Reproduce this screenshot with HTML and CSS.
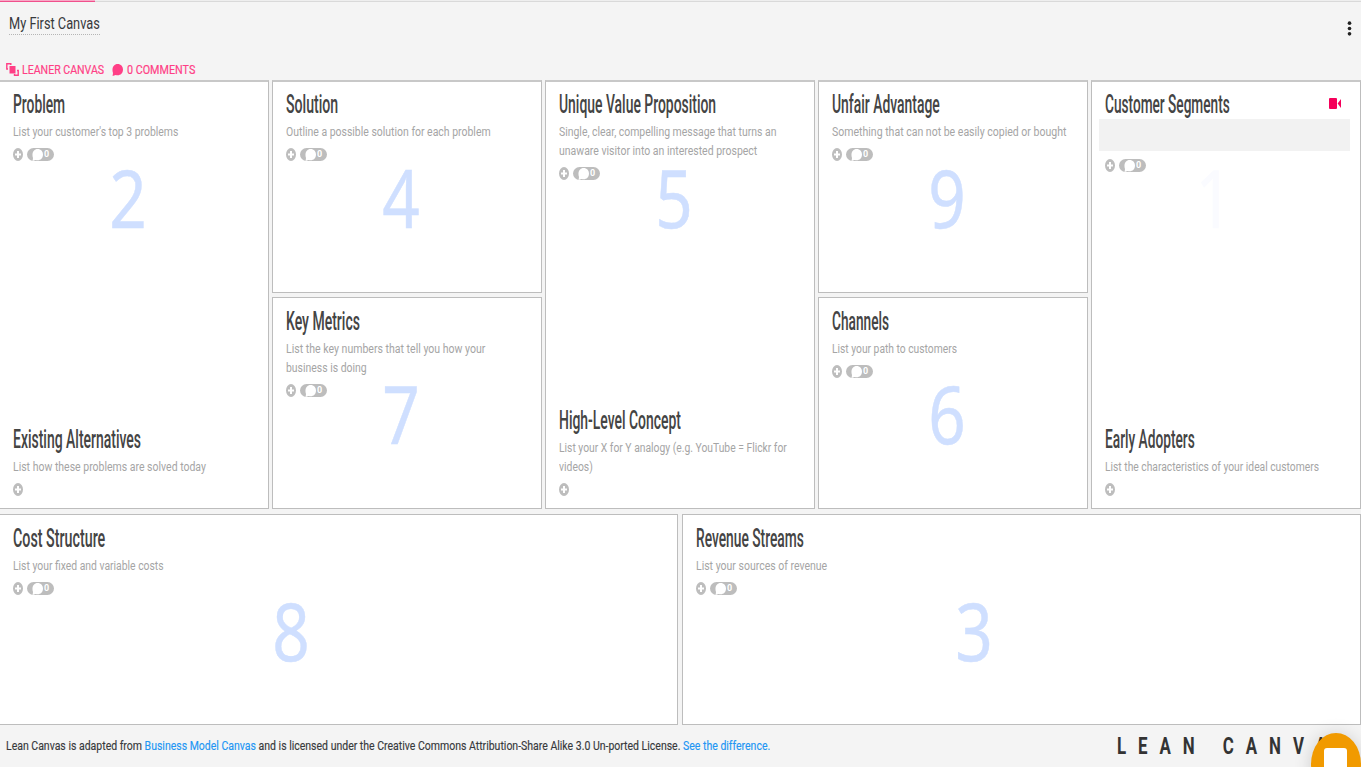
FILE: index.html
```html
<!DOCTYPE html>
<html lang="en">
<head>
<meta charset="utf-8">
<title>My First Canvas</title>
<link rel="stylesheet" href="styles.css">
</head>
<body>
<svg class="defs" aria-hidden="true">
  <symbol id="add" viewBox="0 0 10 13"><ellipse cx="5" cy="6.5" rx="5" ry="6.4" fill="#bdbdbd"/><path d="M5 3v7M2 6.5h6" stroke="#fff" stroke-width="2"/></symbol>
  <symbol id="bubble" viewBox="0 0 11 11" preserveAspectRatio="none"><path d="M.6 11 1 8.2C-.6 4 1.600 0 5.700 0 8.800 0 11 2.200 11 5.100 11 9.200 7.200 11.300 3.600 10Z" fill="currentColor"/></symbol>
</svg>
<div class="page">
  <div class="progress"><div class="progress-bar"></div></div>
  <header class="top">
    <h1 class="name"><span data-fit="91">My First Canvas</span></h1>
    <svg class="more" viewBox="0 0 4 14"><circle cx="2" cy="2" r="1.700"/><circle cx="2" cy="7" r="1.700"/><circle cx="2" cy="12" r="1.700"/></svg>
  </header>
  <nav class="links">
    <svg class="swap" viewBox="0 0 13 13"><path d="M3.500 3h6v7.500h-6z" fill="currentColor"/><path d="M2 6H.8V.8h4V2M11 7.500h1.200v4.700H8.500V11" fill="none" stroke="currentColor" stroke-width="1.400"/></svg>
    <a class="link-a"><span data-fit="82">LEANER CANVAS</span></a>
    <svg class="talk"><use href="#bubble"/></svg>
    <a><span data-fit="68">0 COMMENTS</span></a>
  </nav>
  <main class="canvas">
    <div class="row">
      <section class="box split">
        <div class="num">2</div>
        <div class="block"><h2><span data-fit="52">Problem</span></h2><p><span data-fit="165">List your customer's top 3 problems</span></p><div class="tools"><svg class="add"><use href="#add"/></svg><div class="pill"><svg><use href="#bubble"/></svg><b>0</b></div></div></div>
        <div class="block"><h2><span data-fit="128">Existing Alternatives</span></h2><p><span data-fit="193">List how these problems are solved today</span></p><div class="tools"><svg class="add"><use href="#add"/></svg></div></div>
      </section>
      <div class="stack">
        <section class="box">
          <div class="num">4</div>
          <div class="block"><h2><span data-fit="52">Solution</span></h2><p><span data-fit="205">Outline a possible solution for each problem</span></p><div class="tools"><svg class="add"><use href="#add"/></svg><div class="pill"><svg><use href="#bubble"/></svg><b>0</b></div></div></div>
        </section>
        <section class="box">
          <div class="num">7</div>
          <div class="block"><h2><span data-fit="74">Key Metrics</span></h2><p><span data-fit="199">List the key numbers that tell you how your</span><span data-fit="81">business is doing</span></p><div class="tools"><svg class="add"><use href="#add"/></svg><div class="pill"><svg><use href="#bubble"/></svg><b>0</b></div></div></div>
        </section>
      </div>
      <section class="box split">
        <div class="num">5</div>
        <div class="block"><h2><span data-fit="157">Unique Value Proposition</span></h2><p><span data-fit="217">Single, clear, compelling message that turns an</span><span data-fit="198">unaware visitor into an interested prospect</span></p><div class="tools"><svg class="add"><use href="#add"/></svg><div class="pill"><svg><use href="#bubble"/></svg><b>0</b></div></div></div>
        <div class="block"><h2><span data-fit="122">High-Level Concept</span></h2><p><span data-fit="228">List your X for Y analogy (e.g. YouTube = Flickr for</span><span data-fit="34">videos)</span></p><div class="tools"><svg class="add"><use href="#add"/></svg></div></div>
      </section>
      <div class="stack">
        <section class="box">
          <div class="num">9</div>
          <div class="block"><h2><span data-fit="108">Unfair Advantage</span></h2><p><span data-fit="234">Something that can not be easily copied or bought</span></p><div class="tools"><svg class="add"><use href="#add"/></svg><div class="pill"><svg><use href="#bubble"/></svg><b>0</b></div></div></div>
        </section>
        <section class="box">
          <div class="num">6</div>
          <div class="block"><h2><span data-fit="57">Channels</span></h2><p><span data-fit="125">List your path to customers</span></p><div class="tools"><svg class="add"><use href="#add"/></svg><div class="pill"><svg><use href="#bubble"/></svg><b>0</b></div></div></div>
        </section>
      </div>
      <section class="box split">
        <div class="num faint">1</div>
        <div class="block"><div class="head"><h2><span data-fit="125">Customer Segments</span></h2><svg class="video" viewBox="0 0 12 11"><rect width="8" height="11" rx="1"/><path d="M8.600 5.500 12 1v9z"/></svg></div><div class="field"></div><div class="tools"><svg class="add"><use href="#add"/></svg><div class="pill"><svg><use href="#bubble"/></svg><b>0</b></div></div></div>
        <div class="block"><h2><span data-fit="90">Early Adopters</span></h2><p><span data-fit="214">List the characteristics of your ideal customers</span></p><div class="tools"><svg class="add"><use href="#add"/></svg></div></div>
      </section>
    </div>
    <div class="row lower">
      <section class="box">
        <div class="num wide">8</div>
        <div class="block"><h2><span data-fit="92">Cost Structure</span></h2><p><span data-fit="151">List your fixed and variable costs</span></p><div class="tools"><svg class="add"><use href="#add"/></svg><div class="pill"><svg><use href="#bubble"/></svg><b>0</b></div></div></div>
      </section>
      <section class="box">
        <div class="num wide">3</div>
        <div class="block"><h2><span data-fit="108">Revenue Streams</span></h2><p><span data-fit="131">List your sources of revenue</span></p><div class="tools"><svg class="add"><use href="#add"/></svg><div class="pill"><svg><use href="#bubble"/></svg><b>0</b></div></div></div>
      </section>
    </div>
  </main>
  <footer class="foot">
    <div class="license"><span data-fit="764">Lean Canvas is adapted from <a>Business Model Canvas</a> and is licensed under the Creative Commons Attribution-Share Alike 3.0 Un-ported License. <a>See the difference.</a></span></div>
    <div class="brand"><span data-fit="244">LEAN CANVAS</span></div>
  </footer>
  <div class="chat"><div class="chat-icon"></div></div>
</div>
<script src="fit.js"></script>
</body>
</html>
```

FILE: styles.css
```css
* { box-sizing: border-box; }
body {
  margin: 0;
  background: #f4f4f4;
  color: #37393c;
  font-family: Roboto, "Liberation Sans", sans-serif;
}
h1, h2, p { margin: 0; font-weight: 400; }
svg { display: block; flex: none; }
.defs { position: absolute; width: 0; height: 0; }
.page {
  position: relative;
  display: flex;
  flex-direction: column;
  width: 1361px;
  height: 767px;
  overflow: hidden;
}
[data-fit] {
  display: block;
  width: max-content;
  white-space: nowrap;
  transform-origin: left center;
}
.progress { height: 2px; background: linear-gradient(#eee 50%, #d9d9d9 50%); }
.progress-bar { width: 95px; height: 2px; background: linear-gradient(#f7a8c6 50%, #f0508c 50%); }
.top { display: flex; justify-content: space-between; height: 57px; padding: 9px 9px 0 9px; }
.name {
  width: 91px;
  height: 24px;
  border-bottom: 1px dotted #b5b5b5;
  font-size: 17px;
  line-height: 24px;
}
.more { width: 5px; height: 15px; margin: 10px 0 0; fill: #222; }
.links {
  display: flex;
  align-items: center;
  height: 21px;
  padding-left: 6px;
  color: #ff3f86;
  font-size: 12.500px;
  line-height: 18px;
  -webkit-text-stroke: .2px #ff3f86;
}
.links a { width: 90px; }
.swap { width: 13px; height: 13px; margin-right: 3px; }
.talk { width: 11px; height: 12px; margin: 0 4px 0 0; }
.canvas { display: flex; flex-direction: column; gap: 5px; width: 1362px; margin-left: -1px; }
.row { display: grid; grid-template-columns: repeat(5, 270px); gap: 3px; height: 429px; }
.lower { grid-template-columns: 679px 679px; column-gap: 4px; height: 211px; }
.stack { display: grid; grid-template-columns: minmax(0, 1fr); grid-template-rows: 213px 212px; gap: 4px; }
.box {
  position: relative;
  display: flex;
  flex-direction: column;
  justify-content: space-between;
  min-width: 0;
  padding: 8px 10px 12px 13px;
  background: #fff;
  border: 1px solid #bdbdbd;
}
.row:not(.lower) > .box, .stack > .box:first-child { border-top: 2px solid #c8c8c8; padding-top: 7px; }
.block { position: relative; }
h2 { height: 30px; color: #444; font-size: 25px; font-weight: 500; line-height: 31px; }
p { padding-top: 4px; color: #a5a5a5; font-size: 12.500px; line-height: 18.500px; }
.tools { display: flex; gap: 4px; height: 20px; padding-top: 6.500px; }
.add { width: 10px; height: 13px; }
.pill {
  display: flex;
  width: 27px;
  height: 13px;
  padding: 1px 0 0 5px;
  background: #bdbdbd;
  border-radius: 6.500px;
  color: #fff;
}
.pill svg { width: 11px; height: 12px; }
.pill b { margin-left: 1px; font-size: 9px; line-height: 10px; }
.num {
  position: absolute;
  top: 84px;
  left: 88px;
  width: 80px;
  color: #cfdfff;
  font-family: "Noto Sans", sans-serif;
  font-size: 80px;
  line-height: 62px;
  text-align: center;
  transform: scaleX(.82);
  -webkit-text-stroke: .5px;
}
.num.wide { left: 251px; }
.num.faint { left: 82px; color: #fafbff; }
.head { display: flex; justify-content: space-between; }
.head h2 { width: 200px; }
.video { width: 12px; height: 11px; margin: 9px 9px 0 0; fill: #f5005a; }
.box:has(.video) .video { margin-right: 9px; }
.field { height: 32px; margin: 0 0 1px -6px; background: #f2f2f2; }
.foot { display: flex; height: 42px; font-size: 12.500px; line-height: 42px; }
.license { flex: none; width: 1111px; padding-left: 6px; overflow: hidden; -webkit-text-stroke: .15px; }
.foot a { color: #2196f3; }
.brand { width: 250px; padding-left: 6px; color: #333; font-size: 24px; font-weight: 700; letter-spacing: 17px; line-height: 43px; }
.chat {
  position: absolute;
  left: 1311px;
  top: 733px;
  width: 50px;
  height: 62px;
  padding: 15px 0 0 13px;
  background: #f19a00;
  border-radius: 50%;
  box-shadow: 0 1px 18px rgba(0, 0, 0, .16);
}
.chat-icon { width: 23px; height: 30px; background: #fff; border-radius: 3px; }
```

FILE: fit.js
```js
document.querySelectorAll('[data-fit]').forEach(function (el) {
  el.style.transform = 'scaleX(' + Number(el.dataset.fit) / el.offsetWidth + ')';
});
```
